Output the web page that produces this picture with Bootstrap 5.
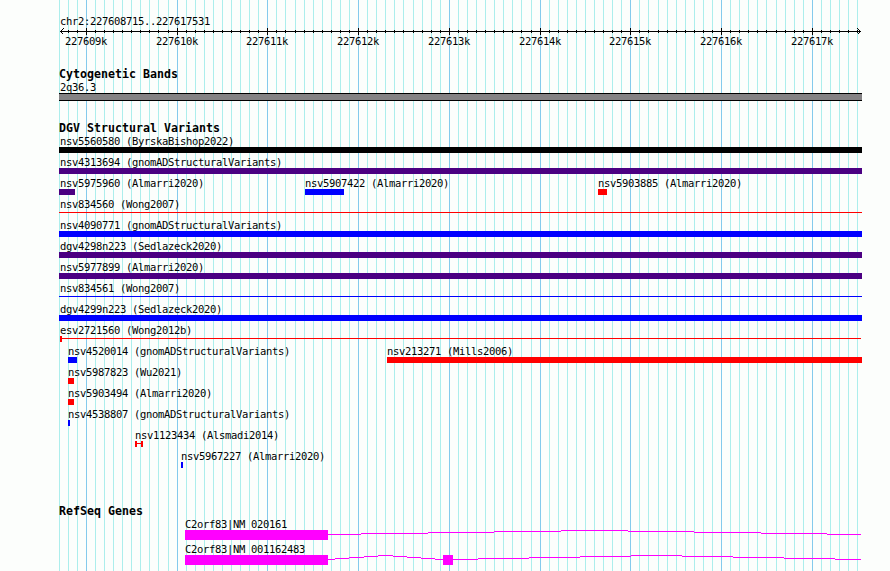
<!DOCTYPE html>
<html lang="en">
<head>
  <meta charset="UTF-8" />
  <meta name="viewport" content="width=device-width, initial-scale=1.0" />
  <title>chr2:227608715..227617531 | Genome Browser</title>
  <link href="https://cdn.jsdelivr.net/npm/bootstrap@5.3.0/dist/css/bootstrap.min.css" rel="stylesheet" />
  <style>
    body {
      background-color: #fcfefc;
      color: #000;
      font-family: "DejaVu Sans Mono", monospace;
      font-size: 10.5px;
      line-height: 12px;
      letter-spacing: -0.32px;
    }
    .panel { width: 890px; height: 571px; }
    .grid-lines { z-index: 0; }
    .tracks { z-index: 1; padding-top: 15px; }
    .region { padding-left: 60px; height: 12px; }
    .track-title {
      font-size: 11.6px;
      font-weight: bold;
      line-height: 14px;
      letter-spacing: 0.016px;
      height: 14px;
      margin: 0;
      padding-left: 59px;
    }
    .bands { height: 54px; padding-top: 67px; box-sizing: content-box; height: 34px; }
    .band-label { padding-left: 60px; height: 12px; }
    .band {
      height: 8px;
      width: 803px;
      margin-left: 59px;
      margin-top: 0;
      background-color: #848284;
      border-top: 1px solid #000;
      border-bottom: 1px solid #000;
    }
    .lane { height: 21px; }
    .gene-lane { height: 25px; }
    .feature { width: 0; flex: none; white-space: nowrap; }
    .feature-name { height: 12px; }
    svg { display: block; overflow: visible; shape-rendering: crispEdges; }
    svg text { letter-spacing: -0.32px; }
  </style>
</head>
<body>
  <div class="panel position-relative overflow-hidden">
    <svg id="grid" class="grid-lines position-absolute top-0 start-0" width="890" height="571"></svg>

    <div class="tracks position-relative d-flex flex-column">
      <div class="region">chr2:227608715..227617531</div>
      <svg id="axis" width="890" height="20"></svg>

      <section style="padding-top: 20px">
        <h2 class="track-title">Cytogenetic Bands</h2>
        <div class="band-label">2q36.3</div>
        <div class="band"></div>
      </section>

      <section style="padding-top: 20px">
        <h2 class="track-title">DGV Structural Variants</h2>
        <div id="variants"></div>
      </section>

      <section style="padding-top: 33px">
        <h2 class="track-title">RefSeq Genes</h2>
        <div id="genes"></div>
      </section>
    </div>
  </div>

  <script src="https://cdn.jsdelivr.net/npm/bootstrap@5.3.0/dist/js/bootstrap.bundle.min.js"></script>
  <script>
    const regionStart = 227608715;
    const regionEnd = 227617531;
    const toX = pos => Math.round(60 + (pos - regionStart) * 800 / (regionEnd - regionStart));

    // Grid and ruler, one line every 100 bp
    let minor = "", major = "", ticks = "", labels = "";
    for (let pos = 227608700; pos <= regionEnd; pos += 100) {
      const x = toX(pos);
      const isMajor = pos % 1000 === 0;
      const line = `M${x + 0.5} 0V571`;
      if (isMajor) {
        major += line;
        ticks += `M${x + 0.5} 1V8`;
        labels += `<text x="${x - 21}" y="18">${pos / 1000}k</text>`;
      } else {
        minor += line;
        if (x > 60) ticks += `M${x + 0.5} 3V6`;
      }
    }
    document.getElementById("grid").innerHTML =
      `<path d="${minor}" stroke="#aceeec"/><path d="${major}" stroke="#84caec"/>`;
    document.getElementById("axis").innerHTML =
      `<path d="M60 4.5H861${ticks}" stroke="#000" fill="none"/>
       <path d="M63.5 1.5L60.5 4.5L63.5 7.5M857.5 1.5L860.5 4.5L857.5 7.5" stroke="#000" fill="none"/>${labels}`;

    // [name, start x, end x, colour, glyph]
    const red = "#ff0000", blue = "#0000ff", indigo = "#4b0082";
    const lanes = [
      [["nsv5560580 (ByrskaBishop2022)", 59, 862, "#000"]],
      [["nsv4313694 (gnomADStructuralVariants)", 59, 862, indigo]],
      [["nsv5975960 (Almarri2020)", 59, 75, indigo],
       ["nsv5907422 (Almarri2020)", 305, 344, blue],
       ["nsv5903885 (Almarri2020)", 598, 607, red]],
      [["nsv834560 (Wong2007)", 59, 862, red, "line"]],
      [["nsv4090771 (gnomADStructuralVariants)", 59, 862, blue]],
      [["dgv4298n223 (Sedlazeck2020)", 59, 862, indigo]],
      [["nsv5977899 (Almarri2020)", 59, 862, indigo]],
      [["nsv834561 (Wong2007)", 59, 862, blue, "line"]],
      [["dgv4299n223 (Sedlazeck2020)", 59, 862, blue]],
      [["esv2721560 (Wong2012b)", 60, 861, red, "start"]],
      [["nsv4520014 (gnomADStructuralVariants)", 68, 77, blue],
       ["nsv213271 (Mills2006)", 387, 862, red]],
      [["nsv5987823 (Wu2021)", 68, 74, red]],
      [["nsv5903494 (Almarri2020)", 68, 74, red]],
      [["nsv4538807 (gnomADStructuralVariants)", 68, 70, blue]],
      [["nsv1123434 (Alsmadi2014)", 135, 143, red, "span"]],
      [["nsv5967227 (Almarri2020)", 181, 183, blue]]
    ];

    function glyph(w, type) {
      if (!type) return `<path d="M0 0H${w}V6H0Z"/>`;
      let d = `M0 2H${w}V3H0Z`;
      if (type !== "line") d += `M0 0H2V6H0Z`;
      if (type === "span") d += `M${w - 2} 0H${w}V6H${w - 2}Z`;
      return `<path d="${d}"/>`;
    }

    document.getElementById("variants").innerHTML = lanes.map(lane => {
      let prev = 0;
      return `<div class="lane d-flex">` + lane.map(([name, x1, x2, color, type]) => {
        const gap = x1 - prev;
        prev = x1;
        const nudge = x1 === 59 ? 1 : 0;
        return `<div class="feature" style="margin-left:${gap}px">
          <div class="feature-name" style="padding-left:${nudge}px">${name}</div>
          <svg width="${x2 - x1}" height="6" fill="${color}">${glyph(x2 - x1, type)}</svg>
        </div>`;
      }).join("") + `</div>`;
    }).join("");

    // Intron runs are [end x, y] steps measured from the top of the exon
    const genes = [
      { name: "C2orf83|NM_020161", exons: [[185, 328]],
        introns: [[328, [[361, 4], [428, 3], [494, 2], [561, 1], [628, 0], [694, 1], [761, 2], [827, 3], [861, 4]]]] },
      { name: "C2orf83|NM_001162483", exons: [[185, 328], [443, 453]],
        introns: [
          [328, [[335, 4], [349, 3], [364, 2], [378, 1], [393, 0], [407, 1], [421, 2], [435, 3], [443, 4]]],
          [453, [[478, 4], [529, 3], [580, 2], [631, 1], [682, 0], [733, 1], [784, 2], [835, 3], [861, 4]]]
        ] }
    ];

    document.getElementById("genes").innerHTML = genes.map(g => {
      let d = g.exons.map(([a, b]) => `M${a - 185} 0H${b - 185}V10H${a - 185}Z`).join("");
      g.introns.forEach(([start, steps]) => {
        let x = start - 185;
        steps.forEach(([end, y]) => {
          d += `M${x} ${y}H${end - 185}V${y + 1}H${x}Z`;
          x = end - 185;
        });
      });
      return `<div class="gene-lane d-flex"><div class="feature" style="margin-left:185px">
        <div class="feature-name">${g.name}</div>
        <svg width="677" height="10" fill="#ff00ff"><path d="${d}"/></svg>
      </div></div>`;
    }).join("");
  </script>
</body>
</html>
